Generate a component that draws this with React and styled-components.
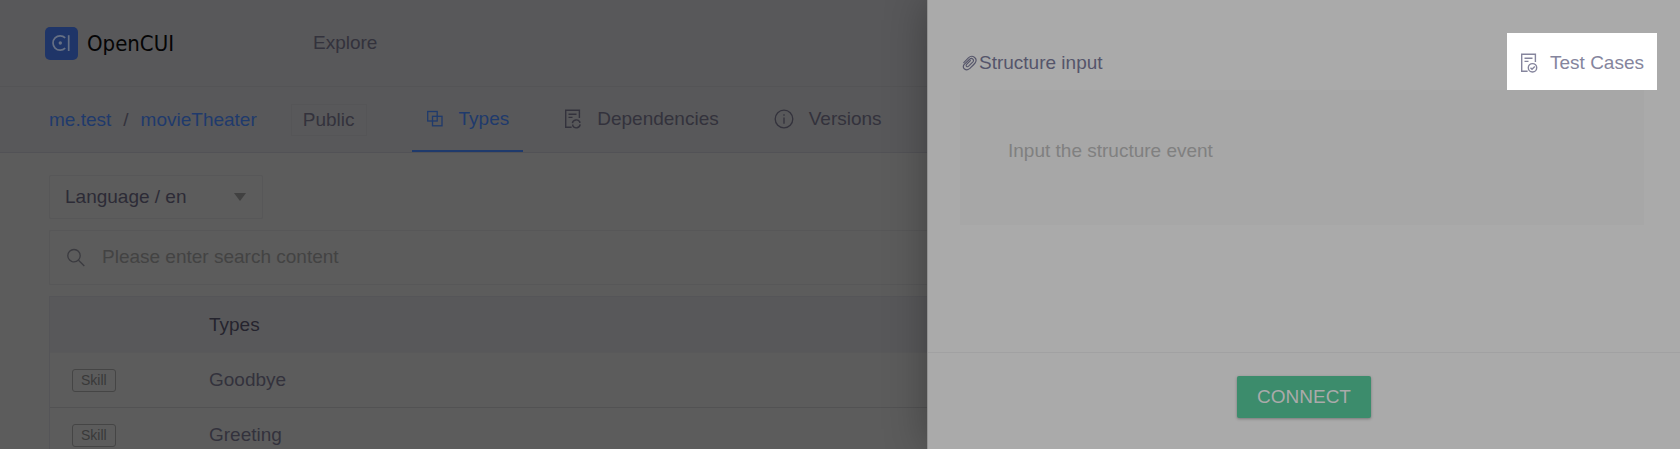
import React from 'react';
import styled, { createGlobalStyle } from 'styled-components';

const types = ['Goodbye', 'Greeting'];

const Logo = () => (
  <svg width="33" height="33" viewBox="0 0 33 33" aria-hidden="true">
    <rect width="33" height="33" rx="5" fill="#1f3568" />
    <path d="M20.2 10.8A7.2 7.2 0 1 0 20.2 21.2" fill="none" stroke="#667084" strokeWidth="1.7" />
    <path d="M23.7 8.2V24" stroke="#667084" strokeWidth="1.7" />
    <circle cx="15.3" cy="16" r="1.7" fill="#667084" />
  </svg>
);

const TypesIcon = () => (
  <svg width="18" height="18" viewBox="0 0 18 18" fill="none" stroke="currentColor" strokeWidth="1.3" aria-hidden="true">
    <rect x="1.7" y="1.5" width="9.5" height="9.5" />
    <rect x="6.5" y="6.3" width="9.5" height="9.5" />
  </svg>
);

const DocIcon = ({ checked }) => (
  <svg width="18" height="20" viewBox="0 0 18 20" fill="none" stroke="currentColor" strokeWidth="1.4" aria-hidden="true">
    <path d="M7.6 18.3H1.7V1.2H15.4V9M4.5 5.2H12.5M4.5 8.4H8.5" />
    {checked ? (
      <>
        <circle cx="12.5" cy="14.8" r="4.2" />
        <path d="M10.5 14.8L12 16.2L14.8 13.4" />
      </>
    ) : (
      <path d="M8.4 14.2A4 4 0 0 1 15.8 12.9V14M16.2 15.4A4 4 0 0 1 8.8 16.9V15.6" />
    )}
  </svg>
);

const InfoIcon = () => (
  <svg width="20" height="20" viewBox="0 0 20 20" fill="none" stroke="currentColor" strokeWidth="1.3" aria-hidden="true">
    <circle cx="10" cy="10" r="8.8" />
    <path d="M10 8.5V14.7M10 5.2V6.8" />
  </svg>
);

const SearchIcon = () => (
  <svg width="20" height="20" viewBox="0 0 20 20" fill="none" stroke="currentColor" strokeWidth="1.3" aria-hidden="true">
    <circle cx="8" cy="7.7" r="6.2" />
    <path d="M12.5 12.2L18.3 18" />
  </svg>
);

const ClipIcon = () => (
  <svg width="16" height="16" viewBox="0 0 18 18" fill="none" stroke="currentColor" strokeWidth="1.3" strokeLinecap="round" aria-hidden="true">
    <path d="M2 8.5L7.2 3.3C11.5-1 18.2 3.5 14.8 8.8C13.5 10.8 10.5 13.4 8.4 15.4C4.5 18.8-.5 14.5 2.5 10.6L8.6 4.8C11.2 2.5 14.4 5.4 12 8L7.4 12.6C5.8 14.1 3.6 12.2 5.2 10.5L9.5 6.4" />
  </svg>
);

export default () => (
  <>
    <GlobalStyle />
    <Page>
      <Main>
        <TopBar>
          <Brand href="#"><Logo />OpenCUI</Brand>
          <TopLink href="#">Explore</TopLink>
        </TopBar>
        <NavBar>
          <Crumbs>
            <a href="#">me.test</a>
            <span>/</span>
            <a href="#">movieTheater</a>
          </Crumbs>
          <Visibility>Public</Visibility>
          <Tabs>
            <Tab href="#" $active><TypesIcon />Types</Tab>
            <Tab href="#"><DocIcon />Dependencies</Tab>
            <Tab href="#"><InfoIcon />Versions</Tab>
          </Tabs>
        </NavBar>
        <Content>
          <Language aria-label="Language">
            <option>Language / en</option>
          </Language>
          <SearchBox>
            <SearchIcon />
            <input type="search" aria-label="Search types" placeholder="Please enter search content" />
          </SearchBox>
          <Table>
            <thead>
              <tr>
                <th aria-label="Kind" />
                <th>Types</th>
              </tr>
            </thead>
            <tbody>
              {types.map(name => (
                <tr key={name}>
                  <td><Tag>Skill</Tag></td>
                  <td>{name}</td>
                </tr>
              ))}
            </tbody>
          </Table>
        </Content>
      </Main>
      <Drawer>
        <DrawerHead>
          <InputLabel htmlFor="structure"><ClipIcon />Structure input</InputLabel>
          <TestCases type="button"><DocIcon checked />Test Cases</TestCases>
        </DrawerHead>
        <StructureInput id="structure" placeholder="Input the structure event" />
        <DrawerFoot>
          <Connect type="button">CONNECT</Connect>
        </DrawerFoot>
      </Drawer>
    </Page>
  </>
);

const GlobalStyle = createGlobalStyle`
  * {
    box-sizing: border-box;
  }
  body {
    margin: 0;
    background: #5c5c5c;
  }
  body, button, input, select, textarea {
    font-family: "Liberation Sans", Arial, sans-serif;
    font-size: 19px;
  }
  a {
    text-decoration: none;
  }
  svg {
    flex: none;
  }
`

const Page = styled.div`
  display: grid;
  grid-template-columns: minmax(0, 927fr) minmax(0, 753fr);
  grid-template-rows: minmax(0, 1fr);
  height: 100vh;
  overflow: hidden;
`

const Main = styled.main`
  min-width: 0;
  color: #33323c;
`

const TopBar = styled.header`
  display: flex;
  align-items: center;
  height: 87px;
  padding-left: 45px;
  background: #58585a;
  border-bottom: 1px solid #545456;
`

const Brand = styled.a`
  display: flex;
  align-items: center;
  gap: 9px;
  width: 268px;
  color: #050505;
  font-family: "DejaVu Sans Condensed", "DejaVu Sans", sans-serif;
  font-size: 22px;
`

const TopLink = styled.a`
  color: #33323c;
`

const NavBar = styled.nav`
  display: flex;
  align-items: center;
  height: 66px;
  padding-left: 49px;
  background: #58585a;
  border-bottom: 1px solid #525256;
  white-space: nowrap;
`

const Crumbs = styled.div`
  display: flex;
  gap: 12px;
  a {
    color: #1f3a6c;
  }
`

const Visibility = styled.span`
  margin-left: 34px;
  padding: 0 11px;
  border: 1px solid #555557;
  line-height: 30px;
`

const Tabs = styled.div`
  display: flex;
  align-self: stretch;
  gap: 27px;
  margin-left: 45px;
`

const Tab = styled.a`
  display: flex;
  align-items: center;
  gap: 15px;
  padding: 0 14px;
  color: ${props => props.$active ? '#1f3a6c' : '#33323c'};
  border-bottom: 2px solid ${props => props.$active ? '#1f3a6c' : 'transparent'};
`

const Content = styled.section`
  padding: 22px 0 0 49px;
`

const Language = styled.select`
  display: block;
  width: 214px;
  height: 44px;
  padding: 0 15px 2px;
  color: #2c2b36;
  border: 1px solid #575758;
  border-radius: 2px;
  appearance: none;
  background: #5c5c5c url("data:image/svg+xml,%3Csvg xmlns='http://www.w3.org/2000/svg' width='12' height='8'%3E%3Cpath d='M0 0H12L6 8Z' fill='%23414141'/%3E%3C/svg%3E") no-repeat right 16px center;
`

const SearchBox = styled.div`
  display: flex;
  align-items: center;
  gap: 16px;
  height: 55px;
  margin: 11px 0;
  padding-left: 16px;
  color: #3b3b40;
  border: 1px solid #575758;
  border-right: 0;
  border-radius: 2px 0 0 2px;
  input {
    flex: 1;
    min-width: 0;
    padding: 0 0 2px;
    color: #33323c;
    background: none;
    border: 0;
    outline: none;
  }
  input::placeholder {
    color: #434343;
  }
`

const Table = styled.table`
  width: 100%;
  border: 1px solid #555558;
  border-right: 0;
  border-spacing: 0;
  th, td {
    height: 55px;
    padding: 0;
    text-align: left;
    border-bottom: 1px solid #525253;
  }
  th {
    height: 56px;
    color: #25242e;
    font-weight: normal;
    background: #58585a;
    border-color: #59595a;
  }
  th:first-child, td:first-child {
    width: 159px;
    padding-left: 22px;
  }
`

const Tag = styled.span`
  display: inline-block;
  padding: 0 8px;
  color: #393939;
  border: 1px solid #454545;
  border-radius: 3px;
  font-size: 14px;
  line-height: 21px;
`

const Drawer = styled.aside`
  display: flex;
  flex-direction: column;
  position: relative;
  background: #aaa;
  border-left: 1px solid #929292;
  box-shadow: 0 0 40px rgba(0, 0, 0, .3);
`

const DrawerHead = styled.div`
  display: flex;
  justify-content: space-between;
  align-items: center;
  padding: 33px 23px 0 34px;
`

const InputLabel = styled.label`
  display: flex;
  align-items: center;
  gap: 1px;
  padding-top: 2px;
  color: #55556a;
`

const TestCases = styled.button`
  display: flex;
  align-items: center;
  gap: 12px;
  height: 57px;
  padding: 2px 13px 0;
  color: #85859d;
  background: #fff;
  border: 0;
`

const StructureInput = styled.textarea`
  height: 135px;
  margin: 0 36px 0 32px;
  padding: 50px 48px;
  color: #55556a;
  background: #a7a7a7;
  border: 0;
  outline: none;
  resize: none;
  &::placeholder {
    color: #808080;
  }
`

const DrawerFoot = styled.div`
  display: flex;
  justify-content: center;
  margin-top: auto;
  padding: 23px 0 31px;
  border-top: 1px solid #a1a1a2;
`

const Connect = styled.button`
  height: 42px;
  padding: 0 20px;
  color: #aaa;
  background: #3c8c6c;
  border: 0;
  border-radius: 2px;
  box-shadow: 0 1px 3px rgba(0, 0, 0, .3);
`
